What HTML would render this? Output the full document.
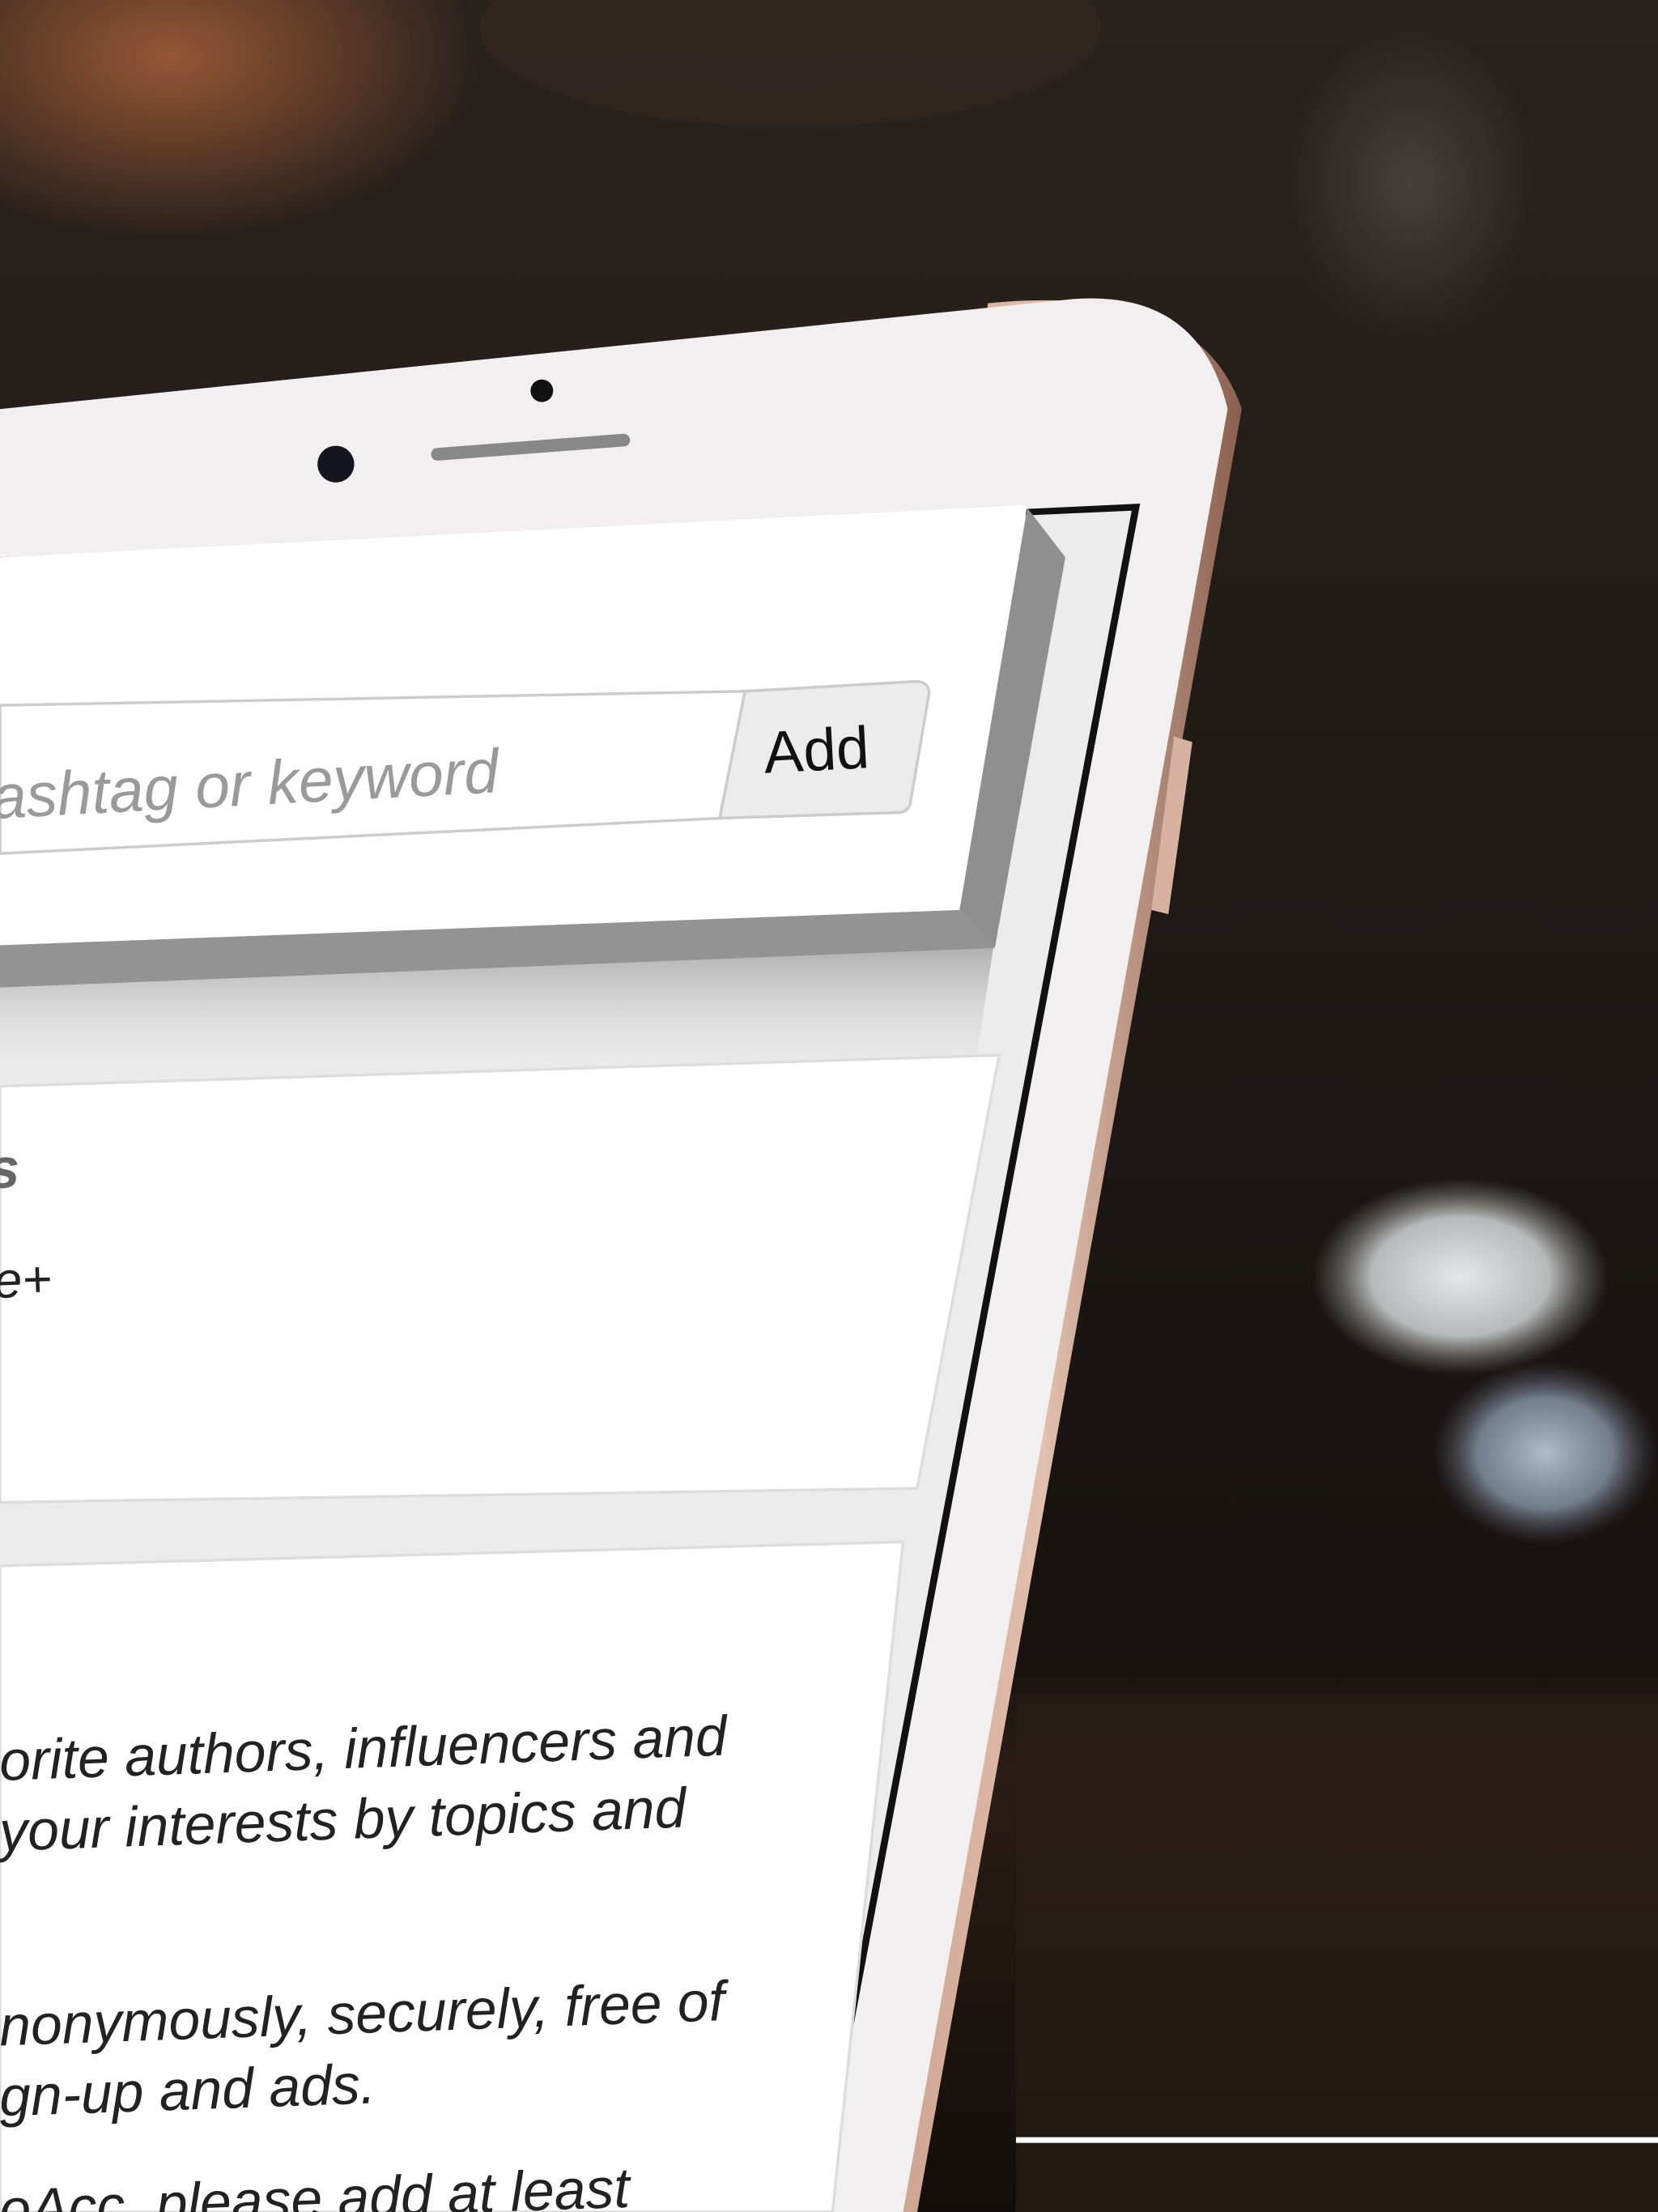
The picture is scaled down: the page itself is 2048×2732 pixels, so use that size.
<!DOCTYPE html>
<html><head><meta charset="utf-8"><style>
html,body{margin:0;padding:0;background:#1a1512;}
svg{display:block;width:2048px;height:2732px;}
text{font-family:"Liberation Sans",sans-serif;}
</style></head><body>
<svg viewBox="0 0 1175 1568" preserveAspectRatio="none" xmlns="http://www.w3.org/2000/svg">
<defs>
<radialGradient id="glow" cx="0.5" cy="0.5" r="0.5"><stop offset="0" stop-color="#a8603a" stop-opacity="0.85"/><stop offset="1" stop-color="#a8603a" stop-opacity="0"/></radialGradient>
<radialGradient id="bok" cx="0.5" cy="0.5" r="0.5"><stop offset="0" stop-color="#e4e8e8"/><stop offset="0.6" stop-color="#c8cccc" stop-opacity="0.9"/><stop offset="1" stop-color="#888" stop-opacity="0"/></radialGradient>
<radialGradient id="bok2" cx="0.5" cy="0.5" r="0.5"><stop offset="0" stop-color="#aebccc"/><stop offset="0.6" stop-color="#8898a8" stop-opacity="0.8"/><stop offset="1" stop-color="#556" stop-opacity="0"/></radialGradient>
<radialGradient id="fog" cx="0.5" cy="0.5" r="0.5"><stop offset="0" stop-color="#5a5450" stop-opacity="0.6"/><stop offset="1" stop-color="#5a5450" stop-opacity="0"/></radialGradient>
<linearGradient id="bg" x1="0" y1="0" x2="0" y2="1"><stop offset="0" stop-color="#2a221d"/><stop offset="0.5" stop-color="#1c1714"/><stop offset="0.75" stop-color="#17120f"/><stop offset="0.8" stop-color="#2a1d15"/><stop offset="1" stop-color="#120d0a"/></linearGradient>
<linearGradient id="shadow" x1="0" y1="0" x2="0" y2="1"><stop offset="0" stop-color="#a8a8a8"/><stop offset="1" stop-color="#ececec" stop-opacity="0"/></linearGradient>
<linearGradient id="rose" x1="0" y1="0" x2="1" y2="0"><stop offset="0" stop-color="#c79a86"/><stop offset="0.5" stop-color="#e2bfae"/><stop offset="1" stop-color="#8a5f4e"/></linearGradient>
</defs>
<rect width="1175" height="1568" fill="url(#bg)"/>
<ellipse cx="120" cy="40" rx="220" ry="130" fill="url(#glow)"/>
<ellipse cx="560" cy="20" rx="220" ry="70" fill="#3a2e26" opacity="0.4"/>
<ellipse cx="1000" cy="130" rx="90" ry="110" fill="url(#fog)"/>
<ellipse cx="1035" cy="905" rx="105" ry="70" fill="url(#bok)"/>
<ellipse cx="1095" cy="1030" rx="80" ry="65" fill="url(#bok2)"/>
<rect x="720" y="1200" width="455" height="368" fill="#2c1f17" opacity="0.6"/>
<line x1="720" y1="1517" x2="1175" y2="1517" stroke="#fff" stroke-width="4"/>
<path d="M700 215 Q850 200 880 290 L650 1568 L600 1568 Z" fill="url(#rose)"/>
<path d="M832 522 L845 526 L828 648 L816 645 Z" fill="#d8b2a0"/>
<path d="M0 290 L760 212 Q850 205 870 290 L640 1568 L0 1568 Z" fill="#f1efef"/>
<circle cx="238" cy="329" r="13" fill="#151520"/>
<circle cx="384" cy="277" r="8" fill="#111"/>
<path d="M310 322 L442 312" stroke="#888" stroke-width="9" stroke-linecap="round"/>
<path d="M0 395 L808 357 L580 1568 L0 1568 Z" fill="#111"/>
<path d="M0 398 L802 362 L575 1568 L0 1568 Z" fill="#ececec"/>
<path d="M0 690 L705 665 L692 750 L0 775 Z" fill="url(#shadow)"/>
<path d="M728 360 L755 395 L705 672 L680 645 Z" fill="#8f8f8f"/>
<path d="M0 670 L680 645 L705 672 L0 700 Z" fill="#939393"/>
<path d="M0 395 L728 358 L680 645 L0 670 Z" fill="#fff"/>
<path d="M0 500 L528 490 L510 580 L0 605 Z" fill="#fff" stroke="#ccc" stroke-width="2"/>
<path d="M528 490 L650 483 Q660 484 658 494 L645 570 Q643 576 636 576 L510 580 Z" fill="#ececec" stroke="#ccc" stroke-width="2"/>
<text x="-5" y="580" font-size="44" fill="#9a9a9a" font-style="italic" transform="rotate(-3 0 580)">ashtag or keyword</text>
<text x="542" y="548" font-size="42" fill="#111" transform="rotate(-3 542 548)">Add</text>
<path d="M0 770 L708 748 L650 1055 L0 1065 Z" fill="#fff" stroke="#ddd" stroke-width="2"/>
<text x="-8" y="842" font-size="40" fill="#666" font-weight="bold" font-style="italic" transform="rotate(-2 0 842)">s</text>
<text x="-4" y="920" font-size="36" fill="#222" font-style="italic" transform="rotate(-2 0 920)">e+</text>
<path d="M0 1110 L640 1093 L590 1568 L0 1568 Z" fill="#fff" stroke="#ddd" stroke-width="2"/>
<g font-size="40" fill="#222" font-style="italic">
<text x="0" y="1262" transform="rotate(-2 0 1262)">orite authors, influencers and</text>
<text x="0" y="1312" transform="rotate(-2 0 1312)">your interests by topics and</text>
<text x="0" y="1450" transform="rotate(-2 0 1450)">nonymously, securely, free of</text>
<text x="0" y="1500" transform="rotate(-2 0 1500)">gn-up and ads.</text>
<text x="0" y="1580" transform="rotate(-2 0 1580)">oAcc, please add at least</text>
</g>
</svg>
</body></html>
